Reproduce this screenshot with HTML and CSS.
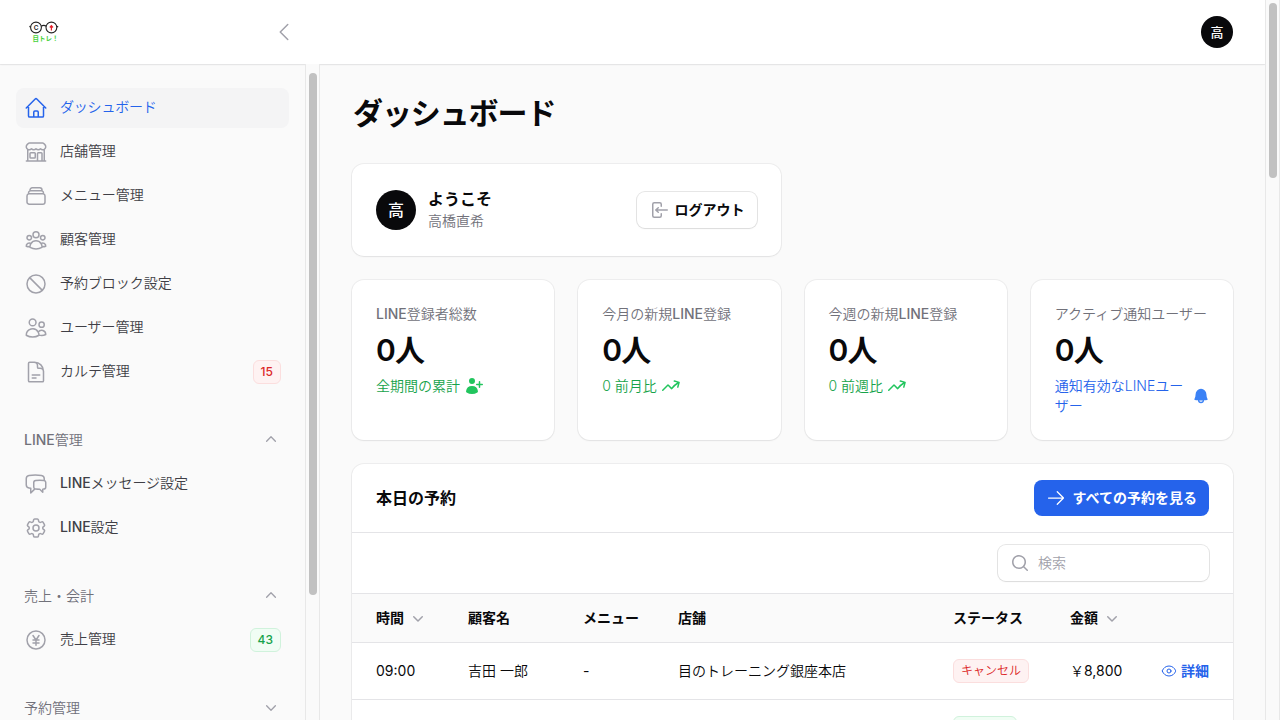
FILE: index.html
```html
<!DOCTYPE html>
<html lang="ja">
<head>
<meta charset="utf-8">
<title>ダッシュボード</title>
<link rel="stylesheet" href="styles.css">
</head>
<body>
<div class="app">
  <div class="page">
    <header class="topbar">
      <div class="brand">
        <svg class="logo" viewBox="0 0 30 22" fill="none">
          <circle cx="7" cy="6.5" r="5.4" stroke="#222" stroke-width="1.1"/>
          <circle cx="22.4" cy="6.5" r="5.4" stroke="#222" stroke-width="1.1"/>
          <path d="M12.2 5.2c1.5-1.1 3.6-1.1 5.1 0M1.6 6 .4 5.4M27.8 6l1.4-.6" stroke="#222" stroke-width="1.2"/>
          <path d="M22.4 9.4V4.8M20.8 6.5l1.6-1.8 1.6 1.8" stroke="#e5202b" stroke-width="1.2"/>
          <text x="4.7" y="8.9" class="logo-c">C</text>
          <text x="3.6" y="20" class="logo-t" textLength="26">目トレ！</text>
        </svg>
        <svg class="icon collapse" viewBox="0 0 24 24"><path d="M15.75 19.5 8.25 12l7.5-7.5"/></svg>
      </div>
      <div class="avatar small">高</div>
    </header>
    <div class="body">
      <aside class="sidebar">
        <nav class="nav">
          <ul class="group">
            <li class="item active"><svg class="icon" viewBox="0 0 24 24"><path d="m2.25 12 8.954-8.955c.44-.439 1.152-.439 1.591 0L21.75 12M4.5 9.75v10.125c0 .621.504 1.125 1.125 1.125H9.75v-4.875c0-.621.504-1.125 1.125-1.125h2.25c.621 0 1.125.504 1.125 1.125V21h4.125c.621 0 1.125-.504 1.125-1.125V9.75M8.25 21h8.25"/></svg><span>ダッシュボード</span></li>
            <li class="item"><svg class="icon" viewBox="0 0 24 24"><path d="M13.5 21v-7.5a.75.75 0 0 1 .75-.75h3a.75.75 0 0 1 .75.75V21m-4.5 0H2.36m11.14 0H18m0 0h3.64m-1.39 0V9.349M3.75 21V9.349m0 0a3.001 3.001 0 0 0 3.75-.615A2.993 2.993 0 0 0 9.75 9.75c.896 0 1.7-.393 2.25-1.016a2.993 2.993 0 0 0 2.25 1.016c.896 0 1.7-.393 2.25-1.015a3.001 3.001 0 0 0 3.75.614m-16.5 0a3.004 3.004 0 0 1-.621-4.72l1.189-1.19A1.5 1.5 0 0 1 5.378 3h13.243a1.5 1.5 0 0 1 1.06.44l1.19 1.189a3 3 0 0 1-.621 4.72M6.75 18h3.75a.75.75 0 0 0 .75-.75V13.5a.75.75 0 0 0-.75-.75H6.75a.75.75 0 0 0-.75.75v3.75c0 .414.336.75.75.75Z"/></svg><span>店舗管理</span></li>
            <li class="item"><svg class="icon" viewBox="0 0 24 24"><path d="M6 6.878V6a2.25 2.25 0 0 1 2.25-2.25h7.5A2.25 2.25 0 0 1 18 6v.878m-12 0c.235-.083.487-.128.75-.128h10.5c.263 0 .515.045.75.128m-12 0A2.25 2.25 0 0 0 4.5 9v.878m13.5-3A2.25 2.25 0 0 1 19.5 9v.878m0 0a2.246 2.246 0 0 0-.75-.128H5.25c-.263 0-.515.045-.75.128m15 0A2.25 2.25 0 0 1 21 12v6a2.25 2.25 0 0 1-2.25 2.25H5.25A2.25 2.25 0 0 1 3 18v-6c0-.98.626-1.813 1.5-2.122"/></svg><span>メニュー管理</span></li>
            <li class="item"><svg class="icon" viewBox="0 0 24 24"><path d="M18 18.72a9.094 9.094 0 0 0 3.741-.479 3 3 0 0 0-4.682-2.72m.94 3.198.001.031c0 .225-.012.447-.037.666A11.944 11.944 0 0 1 12 21c-2.17 0-4.207-.576-5.963-1.584A6.062 6.062 0 0 1 6 18.719m12 0a5.971 5.971 0 0 0-.941-3.197m0 0A5.995 5.995 0 0 0 12 12.75a5.995 5.995 0 0 0-5.058 2.772m0 0a3 3 0 0 0-4.681 2.72 8.986 8.986 0 0 0 3.74.477m.94-3.197a5.971 5.971 0 0 0-.94 3.197M15 6.75a3 3 0 1 1-6 0 3 3 0 0 1 6 0Zm6 3a2.25 2.25 0 1 1-4.5 0 2.25 2.25 0 0 1 4.5 0Zm-13.5 0a2.25 2.25 0 1 1-4.5 0 2.25 2.25 0 0 1 4.5 0Z"/></svg><span>顧客管理</span></li>
            <li class="item"><svg class="icon" viewBox="0 0 24 24"><path d="M18.364 18.364A9 9 0 0 0 5.636 5.636m12.728 12.728A9 9 0 0 1 5.636 5.636m12.728 12.728L5.636 5.636"/></svg><span>予約ブロック設定</span></li>
            <li class="item"><svg class="icon" viewBox="0 0 24 24"><path d="M15 19.128a9.38 9.38 0 0 0 2.625.372 9.337 9.337 0 0 0 4.121-.952 4.125 4.125 0 0 0-7.533-2.493M15 19.128v-.003c0-1.113-.285-2.16-.786-3.07M15 19.128v.106A12.318 12.318 0 0 1 8.624 21c-2.331 0-4.512-.645-6.374-1.766l-.001-.109a6.375 6.375 0 0 1 11.964-3.07M12 6.375a3.375 3.375 0 1 1-6.75 0 3.375 3.375 0 0 1 6.75 0Zm8.25 2.25a2.625 2.625 0 1 1-5.25 0 2.625 2.625 0 0 1 5.25 0Z"/></svg><span>ユーザー管理</span></li>
            <li class="item"><svg class="icon" viewBox="0 0 24 24"><path d="M19.5 14.25v-2.625a3.375 3.375 0 0 0-3.375-3.375h-1.5A1.125 1.125 0 0 1 13.5 7.125v-1.5a3.375 3.375 0 0 0-3.375-3.375H8.25m0 12.75h7.5m-7.5 3H12M10.5 2.25H5.625c-.621 0-1.125.504-1.125 1.125v17.25c0 .621.504 1.125 1.125 1.125h12.75c.621 0 1.125-.504 1.125-1.125V11.25a9 9 0 0 0-9-9Z"/></svg><span>カルテ管理</span><b class="badge red count">15</b></li>
          </ul>
          <section>
            <h2 class="group-title"><span><em>LINE</em>管理</span><svg class="icon chev" viewBox="0 0 24 24"><path d="m4.5 15.75 7.5-7.5 7.5 7.5"/></svg></h2>
            <ul class="group">
              <li class="item"><svg class="icon" viewBox="0 0 24 24"><path d="M20.25 8.511c.884.284 1.5 1.128 1.5 2.097v4.286c0 1.136-.847 2.1-1.98 2.193-.34.027-.68.052-1.02.072v3.091l-3-3c-1.354 0-2.694-.055-4.02-.163a2.115 2.115 0 0 1-.825-.242m9.345-8.334a2.126 2.126 0 0 0-.476-.095 48.64 48.64 0 0 0-8.048 0c-1.131.094-1.976 1.057-1.976 2.192v4.286c0 .837.46 1.58 1.155 1.951m9.345-8.334V6.637c0-1.621-1.152-3.026-2.76-3.235A48.455 48.455 0 0 0 11.25 3c-2.115 0-4.198.137-6.24.402-1.608.209-2.76 1.614-2.76 3.235v6.226c0 1.621 1.152 3.026 2.76 3.235.577.075 1.157.14 1.74.194V21l4.155-4.155"/></svg><span><em>LINE</em>メッセージ設定</span></li>
              <li class="item"><svg class="icon" viewBox="0 0 24 24"><path d="M9.594 3.94c.09-.542.56-.94 1.11-.94h2.593c.55 0 1.02.398 1.11.94l.213 1.281c.063.374.313.686.645.87.074.04.147.083.22.127.325.196.72.257 1.075.124l1.217-.456a1.125 1.125 0 0 1 1.37.49l1.296 2.247a1.125 1.125 0 0 1-.26 1.431l-1.003.827c-.293.241-.438.613-.43.992a7.723 7.723 0 0 1 0 .255c-.008.378.137.75.43.991l1.004.827c.424.35.534.955.26 1.43l-1.298 2.247a1.125 1.125 0 0 1-1.369.491l-1.217-.456c-.355-.133-.75-.072-1.076.124a6.47 6.47 0 0 1-.22.128c-.331.183-.581.495-.644.869l-.213 1.281c-.09.543-.56.94-1.11.94h-2.594c-.55 0-1.019-.398-1.11-.94l-.213-1.281c-.062-.374-.312-.686-.644-.87a6.52 6.52 0 0 1-.22-.127c-.325-.196-.72-.257-1.076-.124l-1.217.456a1.125 1.125 0 0 1-1.369-.49l-1.297-2.247a1.125 1.125 0 0 1 .26-1.431l1.004-.827c.292-.24.437-.613.43-.991a6.932 6.932 0 0 1 0-.255c.007-.38-.138-.751-.43-.992l-1.004-.827a1.125 1.125 0 0 1-.26-1.43l1.297-2.247a1.125 1.125 0 0 1 1.37-.491l1.216.456c.356.133.751.072 1.076-.124.072-.044.146-.086.22-.128.332-.183.582-.495.644-.869l.214-1.28Z"/><path d="M15 12a3 3 0 1 1-6 0 3 3 0 0 1 6 0Z"/></svg><span><em>LINE</em>設定</span></li>
            </ul>
          </section>
          <section>
            <h2 class="group-title"><span>売上・会計</span><svg class="icon chev" viewBox="0 0 24 24"><path d="m4.5 15.75 7.5-7.5 7.5 7.5"/></svg></h2>
            <ul class="group">
              <li class="item"><svg class="icon" viewBox="0 0 24 24"><path d="m9 7.5 3 4.5m0 0 3-4.5M12 12v5.25M15 12H9m6 3H9m12-3a9 9 0 1 1-18 0 9 9 0 0 1 18 0Z"/></svg><span>売上管理</span><b class="badge green count">43</b></li>
            </ul>
          </section>
          <section>
            <h2 class="group-title"><span>予約管理</span><svg class="icon chev down" viewBox="0 0 24 24"><path d="m19.5 8.25-7.5 7.5-7.5-7.5"/></svg></h2>
          </section>
        </nav>
        <div class="scrollbar nav-scroll"><i class="thumb"></i></div>
      </aside>
      <main class="main">
        <h1 class="title">ダッシュボード</h1>
        <div class="widgets">
          <section class="card account">
            <div class="avatar">高</div>
            <div class="who"><h2>ようこそ</h2><p>高橋直希</p></div>
            <button class="logout"><svg class="icon" viewBox="0 0 20 20"><path class="solid" fill-rule="evenodd" clip-rule="evenodd" d="M3 4.25A2.25 2.25 0 0 1 5.25 2h5.5A2.25 2.25 0 0 1 13 4.25v2a.75.75 0 0 1-1.5 0v-2a.75.75 0 0 0-.75-.75h-5.5a.75.75 0 0 0-.75.75v11.5c0 .414.336.75.75.75h5.5a.75.75 0 0 0 .75-.75v-2a.75.75 0 0 1 1.5 0v2A2.25 2.25 0 0 1 10.75 18h-5.5A2.25 2.25 0 0 1 3 15.75V4.25Z"/><path class="solid" fill-rule="evenodd" clip-rule="evenodd" d="M19 10a.75.75 0 0 0-.75-.75H8.704l1.048-.943a.75.75 0 1 0-1.004-1.114l-2.5 2.25a.75.75 0 0 0 0 1.114l2.5 2.25a.75.75 0 1 0 1.004-1.114l-1.048-.943h9.546A.75.75 0 0 0 19 10Z"/></svg>ログアウト</button>
          </section>
        </div>
        <div class="stats">
          <section class="card stat"><h3><em>LINE</em>登録者総数</h3><strong>0人</strong><p class="desc up"><span>全期間の累計</span><svg class="icon" viewBox="0 0 20 20"><path class="solid" d="M11 5a3 3 0 1 1-6 0 3 3 0 0 1 6 0ZM2.615 16.428a1.224 1.224 0 0 1-.569-1.175 6.002 6.002 0 0 1 11.908 0c.058.467-.172.92-.57 1.174A9.953 9.953 0 0 1 8 18a9.953 9.953 0 0 1-5.385-1.572ZM16.25 5.75a.75.75 0 0 0-1.5 0v2h-2a.75.75 0 0 0 0 1.5h2v2a.75.75 0 0 0 1.5 0v-2h2a.75.75 0 0 0 0-1.5h-2v-2Z"/></svg></p></section>
          <section class="card stat"><h3>今月の新規<em>LINE</em>登録</h3><strong>0人</strong><p class="desc up"><span>0 前月比</span><svg class="icon" viewBox="0 0 20 20"><path class="solid" fill-rule="evenodd" clip-rule="evenodd" d="M12.577 4.878a.75.75 0 0 1 .919-.53l4.78 1.281a.75.75 0 0 1 .531.919l-1.281 4.78a.75.75 0 0 1-1.449-.387l.81-3.022a19.407 19.407 0 0 0-5.594 5.203.75.75 0 0 1-1.139.093L7 10.06l-4.72 4.72a.75.75 0 0 1-1.06-1.061l5.25-5.25a.75.75 0 0 1 1.06 0l3.074 3.073a20.923 20.923 0 0 1 5.545-4.931l-3.042-.815a.75.75 0 0 1-.53-.919Z"/></svg></p></section>
          <section class="card stat"><h3>今週の新規<em>LINE</em>登録</h3><strong>0人</strong><p class="desc up"><span>0 前週比</span><svg class="icon" viewBox="0 0 20 20"><path class="solid" fill-rule="evenodd" clip-rule="evenodd" d="M12.577 4.878a.75.75 0 0 1 .919-.53l4.78 1.281a.75.75 0 0 1 .531.919l-1.281 4.78a.75.75 0 0 1-1.449-.387l.81-3.022a19.407 19.407 0 0 0-5.594 5.203.75.75 0 0 1-1.139.093L7 10.06l-4.72 4.72a.75.75 0 0 1-1.06-1.061l5.25-5.25a.75.75 0 0 1 1.06 0l3.074 3.073a20.923 20.923 0 0 1 5.545-4.931l-3.042-.815a.75.75 0 0 1-.53-.919Z"/></svg></p></section>
          <section class="card stat"><h3>アクティブ通知ユーザー</h3><strong>0人</strong><p class="desc info"><span>通知有効なLINEユーザー</span><svg class="icon" viewBox="0 0 20 20"><path class="solid" fill-rule="evenodd" clip-rule="evenodd" d="M10 2a6 6 0 0 0-6 6c0 1.887-.454 3.665-1.257 5.234a.75.75 0 0 0 .515 1.076 32.91 32.91 0 0 0 3.256.508 3.5 3.5 0 0 0 6.972 0 32.903 32.903 0 0 0 3.256-.508.75.75 0 0 0 .515-1.076A11.448 11.448 0 0 1 16 8a6 6 0 0 0-6-6ZM8.05 14.943a33.54 33.54 0 0 0 3.9 0 2 2 0 0 1-3.9 0Z"/></svg></p></section>
        </div>
        <section class="card bookings">
          <div class="bookings-head"><h2>本日の予約</h2><button class="primary"><svg class="icon" viewBox="0 0 24 24"><path d="M13.5 4.5 21 12m0 0-7.5 7.5M21 12H3"/></svg>すべての予約を見る</button></div>
          <div class="tools"><label class="search"><svg class="icon" viewBox="0 0 20 20"><path class="solid" fill-rule="evenodd" clip-rule="evenodd" d="M9 3.5a5.5 5.5 0 1 0 0 11 5.5 5.5 0 0 0 0-11ZM2 9a7 7 0 1 1 12.452 4.391l3.328 3.329a.75.75 0 1 1-1.06 1.06l-3.329-3.328A7 7 0 0 1 2 9Z"/></svg><input placeholder="検索"></label></div>
          <table class="table">
            <colgroup><col class="c-time"><col class="c-name"><col class="c-menu"><col class="c-shop"><col class="c-status"><col class="c-price"><col></colgroup>
            <thead><tr><th>時間<svg class="icon sort" viewBox="0 0 20 20"><path class="solid" d="M5.22 8.22a.75.75 0 0 1 1.06 0L10 11.94l3.72-3.72a.75.75 0 1 1 1.06 1.06l-4.25 4.25a.75.75 0 0 1-1.06 0L5.22 9.28a.75.75 0 0 1 0-1.06Z"/></svg></th><th>顧客名</th><th>メニュー</th><th>店舗</th><th>ステータス</th><th>金額<svg class="icon sort" viewBox="0 0 20 20"><path class="solid" d="M5.22 8.22a.75.75 0 0 1 1.06 0L10 11.94l3.72-3.72a.75.75 0 1 1 1.06 1.06l-4.25 4.25a.75.75 0 0 1-1.06 0L5.22 9.28a.75.75 0 0 1 0-1.06Z"/></svg></th><th></th></tr></thead>
            <tbody>
              <tr><td><i class="num">09:00</i></td><td>吉田 一郎</td><td><i class="num">-</i></td><td>目のトレーニング銀座本店</td><td><span class="badge red">キャンセル</span></td><td>￥<i class="num">8,800</i></td><td><a class="detail"><svg class="icon" viewBox="0 0 24 24"><path d="M2.036 12.322a1.012 1.012 0 0 1 0-.639C3.423 7.51 7.36 4.5 12 4.5c4.638 0 8.573 3.007 9.963 7.178.07.207.07.431 0 .639C20.577 16.49 16.64 19.5 12 19.5c-4.638 0-8.573-3.007-9.963-7.178Z"/><path d="M15 12a3 3 0 1 1-6 0 3 3 0 0 1 6 0Z"/></svg>詳細</a></td></tr>
              <tr><td></td><td></td><td></td><td></td><td><span class="badge green wide"></span></td><td></td><td></td></tr>
            </tbody>
          </table>
        </section>
      </main>
    </div>
  </div>
  <div class="scrollbar page-scroll"><i class="thumb"></i></div>
</div>
</body>
</html>
```

FILE: styles.css
```css
* { box-sizing: border-box; margin: 0; padding: 0; }
body { height: 720px; overflow: hidden; background: #fafafa; color: #09090b; font: 350 14px/20px Inter, "Noto Sans CJK JP", sans-serif; -webkit-font-smoothing: antialiased; }
ul { list-style: none; }
em { font-style: normal; font-weight: 500; }
.num { font-style: normal; font-weight: 400; }
button, input { font: inherit; color: inherit; }
.app { display: flex; height: 720px; overflow: hidden; }
.page { flex: 1; min-width: 0; display: flex; flex-direction: column; }
.icon { display: block; flex: none; width: 24px; height: 24px; fill: none; stroke: currentColor; stroke-width: 1.5; stroke-linecap: round; stroke-linejoin: round; color: #a1a1aa; }
.icon .solid { fill: currentColor; stroke: none; }

.topbar { flex: none; height: 64px; display: flex; align-items: center; justify-content: space-between; padding-right: 32px; background: #fff; box-shadow: 0 0 0 1px rgba(9,9,11,.05), 0 1px 2px rgba(0,0,0,.05); }
.brand { width: 320px; display: flex; align-items: center; justify-content: space-between; padding: 0 24px 0 29px; }
.logo { width: 30px; height: 22px; }
.logo-c { font: 600 6.5px Inter, sans-serif; fill: #222; }
.logo-t { font: 700 6.5px "Noto Sans CJK JP", sans-serif; fill: #46d13b; }
.avatar { flex: none; display: grid; place-items: center; width: 40px; height: 40px; border-radius: 50%; background: #09090b; color: #fff; font-size: 16px; line-height: 20px; font-weight: 500; }
.avatar.small { width: 32px; height: 32px; font-size: 13px; padding-bottom: 1px; }

.body { flex: 1; min-height: 0; display: flex; }
.sidebar { flex: none; width: 320px; display: flex; }
.nav { flex: 1; overflow: hidden; display: flex; flex-direction: column; gap: 28px; padding: 24px 16px 0; }
.group { display: flex; flex-direction: column; gap: 4px; }
.item { display: flex; align-items: center; gap: 12px; height: 40px; padding: 0 8px; border-radius: 8px; color: #3f3f46; }
.item span { flex: 1; padding-bottom: 2px; letter-spacing: -.05px; }
.item.active { background: #f4f4f5; color: #2563eb; }
.item.active span { letter-spacing: -.2px; }
.item.active .icon { color: #2563eb; }
.group-title { display: flex; justify-content: space-between; align-items: center; height: 40px; margin-bottom: 4px; padding: 0 8px; color: #71717a; font-size: 14px; font-weight: 350; }
.chev { width: 14px; height: 14px; margin: 0 3px 2px 0; stroke-width: 2.3; }
.chev.down { margin-bottom: 0; }
.badge { display: inline-flex; align-items: center; justify-content: center; height: 24px; padding: 0 7px; border: 1px solid; border-radius: 6px; font-size: 12px; line-height: 16px; font-weight: 350; vertical-align: middle; }
.badge.count { font-weight: 500; }
.badge.red { background: #fef2f2; color: #dc2626; border-color: #fbdede; }
.badge.green { background: #f0fdf4; color: #16a34a; border-color: #d0f2dc; }
.badge.wide { width: 64px; }

.scrollbar { flex: none; width: 15px; padding: 0 0 0 3px; border: solid #e8e8e8; border-width: 0 1px; background: #fafafa; }
.thumb { display: block; width: 8px; border-radius: 4px; background: #c1c1c1; }
.nav-scroll { padding-top: 9px; position: relative; }
.nav-scroll .thumb { height: 522px; }
.page-scroll { padding-top: 3px; }
.page-scroll .thumb { height: 175px; }

.main { flex: 1; min-width: 0; padding: 31px 32px 0; display: flex; flex-direction: column; }
.title { height: 36px; font-size: 30px; line-height: 36px; font-weight: 600; letter-spacing: -1.1px; margin-bottom: 33px; padding-left: 1px; }
.card { background: #fff; border-radius: 12px; box-shadow: 0 0 0 1px rgba(9,9,11,.05), 0 1px 2px rgba(0,0,0,.05); }
.widgets { display: grid; grid-template-columns: 1fr 1fr; gap: 24px; margin-bottom: 24px; }
.account { height: 92px; display: flex; align-items: center; gap: 12px; padding: 0 24px; }
.who { flex: 1; padding-bottom: 2px; }
.who h2 { font-size: 16px; line-height: 24px; font-weight: 600; }
.who p { color: #71717a; }
.logout { display: flex; align-items: center; gap: 6px; height: 36px; padding: 0 12px; border: 0; border-radius: 8px; background: #fff; box-shadow: 0 0 0 1px rgba(9,9,11,.1), 0 1px 2px rgba(0,0,0,.05); font-weight: 600; }
.logout .icon { width: 20px; height: 20px; }
.stats { display: grid; grid-template-columns: repeat(4, 1fr); gap: 24px; margin-bottom: 24px; }
.stat { height: 160px; padding: 24px; display: flex; flex-direction: column; gap: 8px; }
.stat h3 { color: #71717a; font-size: 14px; line-height: 20px; font-weight: 350; white-space: nowrap; }
.stat strong { font-size: 30px; line-height: 36px; font-weight: 600; letter-spacing: -.75px; }
.desc { display: flex; align-items: center; gap: 4px; }
.desc .icon { width: 20px; height: 20px; }
.desc.up { color: #16a34a; }
.desc.up .icon { color: #22c55e; }
.desc.info { color: #2563eb; margin-right: -1px; }
.desc.info span { flex: 1; }
.desc.info .icon { width: 18px; color: #3b82f6; }

.bookings { flex: none; overflow: hidden; }
.bookings-head { height: 69px; display: flex; align-items: center; justify-content: space-between; padding: 0 24px; border-bottom: 1px solid #e4e4e7; }
.bookings-head h2 { font-size: 16px; line-height: 24px; font-weight: 600; }
.primary { display: flex; align-items: center; gap: 7px; height: 36px; padding: 0 12px; border: 0; border-radius: 8px; background: #2563eb; color: #fff; font-weight: 600; }
.primary .icon { width: 20px; height: 20px; color: #fff; }
.tools { height: 61px; display: flex; align-items: center; justify-content: flex-end; padding: 0 24px; border-bottom: 1px solid #e4e4e7; }
.search { display: flex; align-items: center; gap: 8px; width: 211px; height: 36px; padding: 0 12px; border-radius: 8px; box-shadow: 0 0 0 1px rgba(9,9,11,.1), 0 1px 2px rgba(0,0,0,.05); }
.search .icon { width: 20px; height: 20px; }
.search input { width: 130px; border: 0; outline: 0; background: none; }
.search input::placeholder { color: #a1a1aa; }
.table { width: 100%; table-layout: fixed; border-collapse: separate; border-spacing: 0; }
.c-time { width: 104px; } .c-name { width: 115px; } .c-menu { width: 95px; } .c-shop { width: 275px; } .c-status { width: 117px; } .c-price { width: 91px; }
.table th { height: 49px; padding: 0 12px; background: #fafafa; border-bottom: 1px solid #e4e4e7; text-align: left; font-weight: 600; white-space: nowrap; }
.table td { height: 57px; padding: 0 12px; border-bottom: 1px solid #e4e4e7; white-space: nowrap; }
.table th:first-child, .table td:first-child { padding-left: 24px; }
.table td:last-child { padding: 0 24px 0 0; }
.sort { display: inline-block; width: 20px; height: 20px; margin-left: 4px; vertical-align: -5px; }
.detail { display: flex; align-items: center; justify-content: flex-end; gap: 4px; color: #2563eb; font-weight: 600; }
.detail .icon { width: 16px; height: 16px; color: #2563eb; }
```
